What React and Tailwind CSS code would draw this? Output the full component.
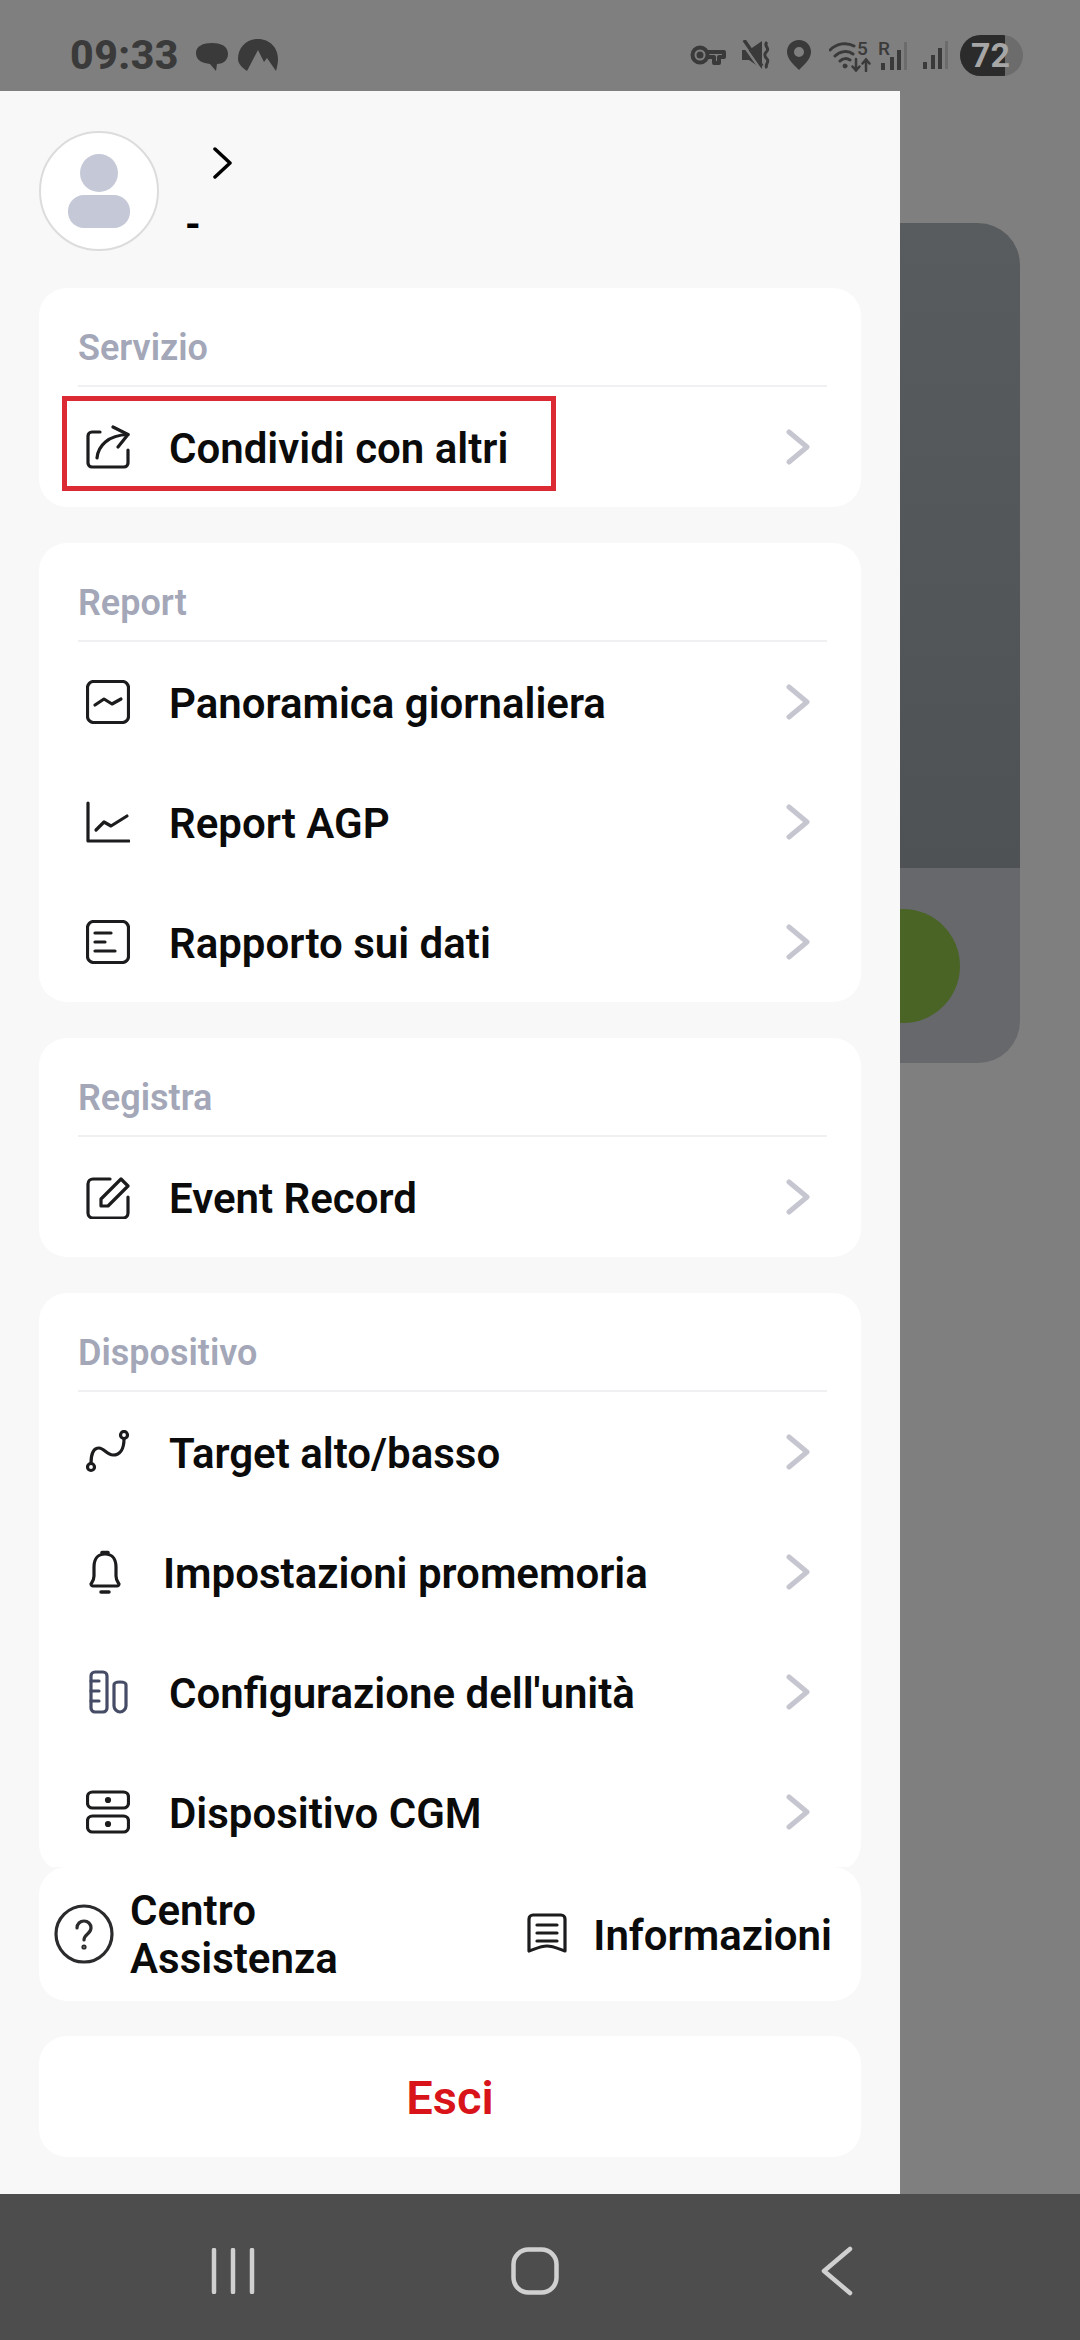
import React from 'react';

const Ic = ({ w = 44, h = 44, color = '#1c1c1f', sw = 3.2, children }) => (
  <svg width={w} height={h} viewBox={`0 0 ${w} ${h}`} fill="none" stroke={color} strokeWidth={sw} strokeLinecap="round" strokeLinejoin="round">
    {children}
  </svg>
);

const ShareIcon = () => (
  <Ic>
    <path d="M14 7H6a4 4 0 0 0-4 4v27a4 4 0 0 0 4 4h32a4 4 0 0 0 4-4V25" />
    <path d="M11 33c1-12 11-23 31-23.500" />
    <path d="M27 2l15 7.500L32 22" />
  </Ic>
);
const OverviewIcon = () => (
  <Ic>
    <rect x="1.500" y="1.500" width="41" height="41" rx="6" />
    <path d="M9 25l9-6 8 5 9-5" />
  </Ic>
);
const AgpIcon = () => (
  <Ic>
    <path d="M2 3v38h41" />
    <path d="M10 30l8-8 7 4 16-10" />
  </Ic>
);
const DataIcon = () => (
  <Ic>
    <rect x="1.500" y="1.500" width="41" height="41" rx="6" />
    <path d="M9 13h16M9 22h10M9 31h20" />
  </Ic>
);
const EditIcon = () => (
  <Ic>
    <path d="M24 4H7a5 5 0 0 0-5 5v29a5 5 0 0 0 5 5h30a5 5 0 0 0 5-5V22" />
    <path d="M15 31v-7L35 4l7 7-20 20z" />
  </Ic>
);
const RouteIcon = () => (
  <Ic>
    <circle cx="5" cy="37" r="3.500" />
    <circle cx="38" cy="5" r="3.500" />
    <path d="M5 33c0-8 2-15 8-15 5 0 8 7 14 7 7 0 11-6 11-16" />
  </Ic>
);
const BellIcon = () => (
  <Ic w={32} h={46}>
    <path d="M16 5c-8 0-11 6-11 13v9c0 4-2 6-3 8 0 1 1 2 2 2h24c1 0 2-1 2-2-1-2-3-4-3-8v-9c0-7-3-13-11-13z" />
    <path d="M13 3.500h6" strokeWidth="3.500" />
    <path d="M12 43h8" strokeWidth="3.500" />
  </Ic>
);
const UnitIcon = () => (
  <Ic w={40} h={44} color="#464c66">
    <rect x="2" y="2" width="16" height="40" rx="4" />
    <path d="M2 11h8M2 21h8M2 31h8" />
    <path d="M25 15c0-2 3-3 6-3s6 1 6 3v21c0 3-3 6-6 6s-6-3-6-6z" />
  </Ic>
);
const CgmIcon = () => (
  <Ic>
    <rect x="1.500" y="2" width="41" height="16" rx="5" />
    <rect x="1.500" y="26" width="41" height="16" rx="5" />
    <circle cx="22" cy="10" r="1.500" fill="#1c1c1f" />
    <circle cx="22" cy="34" r="1.500" fill="#1c1c1f" />
  </Ic>
);
const HelpIcon = () => (
  <Ic w={60} h={60} color="#2b2b2e">
    <circle cx="30" cy="30" r="28" />
    <path d="M23 24c0-4 3-7 7-7s7 3 7 7c0 6-7 6-7 12" />
    <circle cx="30" cy="43" r="1" />
  </Ic>
);
const InfoIcon = () => (
  <Ic w={40} h={42}>
    <path d="M2 6a4 4 0 0 1 4-4h28a4 4 0 0 1 4 4v32c-6-2-12-5-18-5S8 36 2 38z" />
    <path d="M10 12h20M10 20h20M10 28h20" />
  </Ic>
);

const RowChevron = () => (
  <svg width="24" height="36" viewBox="0 0 24 36" fill="none" stroke="#c6c6d0" strokeWidth="5" strokeLinecap="round" strokeLinejoin="round" className="shrink-0">
    <path d="M3 3l18 15L3 33" />
  </svg>
);

const Row = ({ icon, label, slot = 'w-[83px] pl-0', highlighted }) => (
  <div className="relative flex h-[120px] items-center justify-between pl-[47px] pr-[51px]">
    <div className="flex items-center">
      <div className={`flex shrink-0 items-center ${slot}`}>{icon}</div>
      <span className="pt-[2px] text-[42px] font-semibold text-[#0b0b0b]">{label}</span>
    </div>
    <RowChevron />
    {highlighted && (
      <div className="absolute left-[23px] top-[9px] h-[95px] w-[494px] border-[5px] border-[#dc2a34]" />
    )}
  </div>
);

const Section = ({ title, children }) => (
  <div className="shrink-0 rounded-[28px] bg-white">
    <div className="ml-[39px] mr-[34px] flex h-[99px] items-end border-b-2 border-[#f0f0f3] pb-[17px]">
      <span className="text-[36px] font-semibold leading-[40px] text-[#a3a7b8]">{title}</span>
    </div>
    {children}
  </div>
);

const StatusIcons = () => (
  <div className="flex items-center">
    {/* key */}
    <svg width="36" height="22" viewBox="0 0 36 22" fill="none" stroke="#3a3a3a" strokeWidth="4" className="mr-[16px]">
      <circle cx="10" cy="11" r="7.500" />
      <path d="M17 8h17v5h-5v6h-5v-6h-7" strokeLinejoin="round" />
      <circle cx="10" cy="11" r="1.500" fill="#3a3a3a" />
    </svg>
    {/* muted speaker */}
    <svg width="28" height="30" viewBox="0 0 28 30" fill="none" className="mr-[17px]">
      <path d="M0 10h7l13-9v28L7 20H0z" fill="#3a3a3a" />
      <path d="M0 3l19 27" stroke="#7f7f7f" strokeWidth="2.500" />
      <path d="M2 0l18 26" stroke="#3a3a3a" strokeWidth="3.500" />
      <path d="M25 2c-4 4 3 6 0 9s-3 5 0 8-3 6 0 9" stroke="#3a3a3a" strokeWidth="3" />
    </svg>
    {/* pin */}
    <svg width="24" height="30" viewBox="0 0 24 30" className="mr-[18px]">
      <path fillRule="evenodd" fill="#3a3a3a" d="M12 0c7 0 12 5 12 12 0 7-7 13-12 18C7 25 0 19 0 12 0 5 5 0 12 0zm0 7a5 5 0 1 0 0 10 5 5 0 0 0 0-10z" />
    </svg>
    {/* wifi, the 5 sits over the drawing */}
    <div className="relative mr-[7px] h-[33px] w-[42px]">
      <svg width="42" height="33" viewBox="0 0 42 33" fill="none" stroke="#3a3a3a" strokeLinecap="round">
        <path d="M1 11c7-7 17-8 24-4M6 17c5-5 13-6 18-2M11 22c3-3 7-3 10-1" strokeWidth="3" />
        <circle cx="16" cy="27" r="2" fill="#3a3a3a" />
        <path d="M27 20v11m-3.500-3.500 3.500 4 3.500-4M37 32V21m-3.500 3.500 3.500-4 3.500 4" strokeWidth="2.500" />
      </svg>
      <span className="absolute left-[28px] top-0 text-[19px] font-medium leading-[19px] text-[#3a3a3a]">5</span>
    </div>
    {/* signal with roaming */}
    <div className="relative mr-[15px] h-[32px] w-[29px]">
      <svg width="29" height="32" viewBox="0 0 29 32">
        <rect x="3" y="24" width="4" height="7" fill="#3a3a3a" />
        <rect x="12" y="18" width="4" height="13" fill="#3a3a3a" />
        <rect x="19" y="11" width="4" height="20" fill="#3a3a3a" />
        <rect x="26" y="3" width="3" height="28" fill="#6c6c6c" />
      </svg>
      <span className="absolute left-0 top-0 text-[19px] font-medium leading-[19px] text-[#3a3a3a]">R</span>
    </div>
    <svg width="26" height="30" viewBox="0 0 26 30" className="mr-[12px]">
      <rect x="1" y="22" width="4" height="7" fill="#3a3a3a" />
      <rect x="9" y="15" width="4" height="14" fill="#3a3a3a" />
      <rect x="16" y="8" width="4" height="21" fill="#3a3a3a" />
      <rect x="23" y="1" width="3" height="28" fill="#6c6c6c" />
    </svg>
    {/* battery pill */}
    <div className="relative h-[41px] w-[63px] overflow-hidden rounded-full bg-[#6c6c6c]">
      <div className="h-full w-[45px] bg-[#2b2b2b]" />
      <span className="absolute inset-0 flex items-center justify-center pr-[2px] text-[34px] font-bold leading-none text-[#a6a6a6]">72</span>
    </div>
  </div>
);

export default function App() {
  return (
    <div className="relative flex h-[2340px] w-[1080px] flex-col overflow-hidden bg-[#7f7f7f] font-['Roboto',sans-serif]">
      {/* status bar */}
      <div className="flex h-[91px] shrink-0 items-center justify-between pl-[70px] pr-[57px] pt-[19px]">
        <div className="flex items-center">
          <span className="mr-[16px] text-[41px] font-extrabold leading-none tracking-[0.5px] text-[#3a3a3a]">09:33</span>
          <svg width="34" height="31" viewBox="0 0 34 31" className="mr-[9px]">
            <path d="M17 3c9 0 16 3 16 11 0 7-6 10-11 10l-1 7-6-7C8 23 1 21 1 13 1 6 8 3 17 3z" fill="#3a3a3a" />
            <path d="M5 5c3-3 15-5 22-1" fill="none" stroke="#7f7f7f" strokeWidth="1.500" />
          </svg>
          <svg width="40" height="32" viewBox="0 0 40 32">
            <path d="M20 0c12 0 20 9 20 20 0 4-1 8-2 12l-9-13-3 4-6-12-11 21C3 28 0 24 0 20 0 9 8 0 20 0z" fill="#3a3a3a" />
          </svg>
        </div>
        <StatusIcons />
      </div>

      {/* page behind the drawer */}
      <div className="relative flex min-h-0 flex-1 flex-col pl-[60px] pr-[60px] pt-[132px]">
        <div className="h-[840px] overflow-hidden rounded-[42px]">
          <div className="h-[645px] bg-gradient-to-b from-[#595c5e] to-[#4f5255]" />
          <div className="flex h-[195px] items-center justify-end bg-[#66686b] pr-[60px]">
            <div className="h-[114px] w-[114px] rounded-full bg-[#4a6426]" />
          </div>
        </div>

        {/* drawer */}
        <div className="absolute inset-y-0 left-0 flex w-[900px] flex-col bg-[#f8f8f8] px-[39px] pb-[37px]">
          <div className="flex h-[197px] shrink-0 items-start pt-[40px]">
            <div className="flex h-[120px] w-[120px] shrink-0 flex-col items-center justify-center rounded-full border-2 border-[#dcdcdc] bg-white">
              <div className="h-[38px] w-[38px] rounded-full bg-[#c5c8d6]" />
              <div className="mt-[3px] h-[33px] w-[62px] rounded-[16px] bg-[#c5c8d6]" />
            </div>
            <div className="ml-[26px] flex flex-col">
              <svg width="22" height="32" viewBox="0 0 22 32" fill="none" stroke="#000" strokeWidth="3.500" strokeLinecap="round" strokeLinejoin="round" className="ml-[27px] mt-[16px]">
                <path d="M3 2l15 14L3 30" />
              </svg>
              <span className="mt-[24px] text-[40px] font-bold leading-[44px] text-black">-</span>
            </div>
          </div>

          <div className="flex min-h-0 flex-1 flex-col gap-[36px] overflow-hidden">
            <Section title="Servizio">
              <Row icon={<ShareIcon />} label="Condividi con altri" highlighted />
            </Section>
            <Section title="Report">
              <Row icon={<OverviewIcon />} label="Panoramica giornaliera" />
              <Row icon={<AgpIcon />} label="Report AGP" />
              <Row icon={<DataIcon />} label="Rapporto sui dati" />
            </Section>
            <Section title="Registra">
              <Row icon={<EditIcon />} label="Event Record" />
            </Section>
            <Section title="Dispositivo">
              <Row icon={<RouteIcon />} label="Target alto/basso" />
              <Row icon={<BellIcon />} label="Impostazioni promemoria" slot="w-[77px] pl-[3px]" />
              <Row icon={<UnitIcon />} label="Configurazione dell'unità" slot="w-[83px] pl-[3px]" />
              <Row icon={<CgmIcon />} label="Dispositivo CGM" />
            </Section>
          </div>

          <div className="flex h-[134px] shrink-0 items-center justify-between rounded-[28px] bg-white pl-[15px] pr-[29px]">
            <div className="flex items-center">
              <HelpIcon />
              <span className="ml-[16px] w-[250px] pt-[2px] text-[42px] font-semibold leading-[48px] text-[#0b0b0b]">Centro Assistenza</span>
            </div>
            <div className="flex items-center">
              <InfoIcon />
              <span className="ml-[26px] pt-[2px] text-[42px] font-semibold text-[#0b0b0b]">Informazioni</span>
            </div>
          </div>

          <div className="mt-[35px] flex h-[121px] shrink-0 items-center justify-center rounded-[28px] bg-white">
            <span className="pt-[3px] text-[47px] font-semibold text-[#d9131a]">Esci</span>
          </div>
        </div>
      </div>

      {/* nav bar */}
      <div className="grid h-[146px] shrink-0 grid-cols-3 items-center bg-[#4d4d4d] pl-[82px] pr-[92px] pt-[7px]">
        <div className="flex justify-center">
          <svg width="44" height="46" viewBox="0 0 44 46" fill="none" stroke="#d0d0d0" strokeWidth="4.500" strokeLinecap="round">
            <path d="M3 2v42M22 2v42M41 2v42" />
          </svg>
        </div>
        <div className="flex justify-center">
          <svg width="48" height="48" viewBox="0 0 48 48" fill="none" stroke="#d0d0d0" strokeWidth="4.500">
            <rect x="2.500" y="2.500" width="43" height="43" rx="15" />
          </svg>
        </div>
        <div className="flex justify-center">
          <svg width="32" height="50" viewBox="0 0 32 50" fill="none" stroke="#d0d0d0" strokeWidth="4.500" strokeLinecap="round" strokeLinejoin="round">
            <path d="M29 3L3 25l26 22" />
          </svg>
        </div>
      </div>
    </div>
  );
}
